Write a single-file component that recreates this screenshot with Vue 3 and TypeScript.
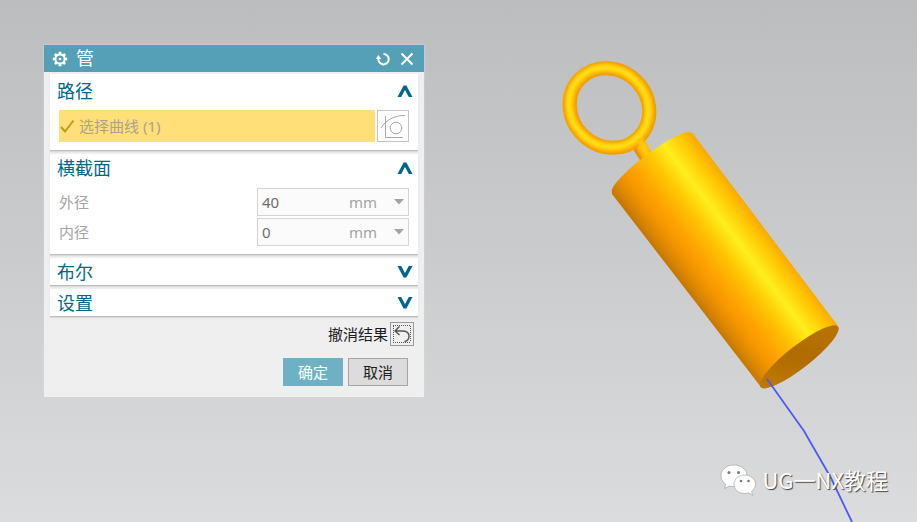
<script setup lang="ts">
import { reactive, ref } from 'vue'

interface Dimension {
  id: string
  label: string
  value: string
}

const dimensions = reactive<Dimension[]>([
  { id: 'outer', label: '外径', value: '40' },
  { id: 'inner', label: '内径', value: '0' },
])

const open = reactive<Record<string, boolean>>({
  path: true,
  section: true,
  boolean: false,
  settings: false,
})

const selected = ref(1)

const teeth = [0, 45, 90, 135, 180, 225, 270, 315]

function toggle(key: string): void {
  open[key] = !open[key]
}
</script>

<template>
  <main class="viewport">
    <svg class="scene" viewBox="0 0 917 522" preserveAspectRatio="xMaxYMin meet" aria-hidden="true">
      <defs>
        <linearGradient id="body" gradientUnits="userSpaceOnUse" x1="686" y1="289.5" x2="764.5" y2="229.5">
          <stop offset="0" stop-color="#c47600" />
          <stop offset="0.08" stop-color="#da8600" />
          <stop offset="0.2" stop-color="#f59600" />
          <stop offset="0.32" stop-color="#ffa202" />
          <stop offset="0.52" stop-color="#ffc404" />
          <stop offset="0.64" stop-color="#ffe010" />
          <stop offset="0.71" stop-color="#ffee20" />
          <stop offset="0.8" stop-color="#ffdc10" />
          <stop offset="0.92" stop-color="#ffc000" />
          <stop offset="1" stop-color="#f8ac00" />
        </linearGradient>
        <linearGradient id="cap" gradientUnits="userSpaceOnUse" x1="760" y1="387" x2="838" y2="326">
          <stop offset="0" stop-color="#c47c00" />
          <stop offset="0.5" stop-color="#b06c00" />
          <stop offset="1" stop-color="#bc7600" />
        </linearGradient>
        <linearGradient id="stem" gradientUnits="userSpaceOnUse" x1="636" y1="155" x2="648" y2="147">
          <stop offset="0" stop-color="#d88000" />
          <stop offset="0.35" stop-color="#ffac00" />
          <stop offset="0.7" stop-color="#ffd90c" />
          <stop offset="1" stop-color="#f8a800" />
        </linearGradient>
        <filter id="soft" x="-10%" y="-10%" width="120%" height="120%">
          <feGaussianBlur stdDeviation="1.4" />
        </filter>
      </defs>

      <path d="M631 146 L642 163 L654 157 L642 136Z" fill="url(#stem)" />
      <g fill="none" transform="rotate(45 609.5 108)">
        <ellipse cx="609.5" cy="108" rx="41.5" ry="38" stroke="#f09a00" stroke-width="14" />
        <ellipse cx="609" cy="108" rx="41.5" ry="38" stroke="#ffba00" stroke-width="10" filter="url(#soft)" />
        <ellipse cx="608.5" cy="108" rx="41.5" ry="38" stroke="#ffe014" stroke-width="5" filter="url(#soft)" />
      </g>
      <path d="M637 142 L644 153 L650 149 L642 138Z" fill="#ffc808" filter="url(#soft)" />

      <path d="M612 192 A49.3 9 -37 0 1 691 133 Q692 132 694 135 L838 326 L761 387 L612 194Z" fill="url(#body)" />
      <ellipse cx="799.3" cy="356.8" rx="49.2" ry="11.4" transform="rotate(-38 799.3 356.8)" fill="url(#cap)" />
      <path d="M767 379 L804 431 L831 478 L852 522" fill="none" stroke="#4a5cf0" stroke-width="1.8" />
    </svg>

    <form class="dialog" aria-label="管" @submit.prevent>
      <header class="titlebar">
        <svg class="gear" viewBox="0 0 16 16" aria-hidden="true">
          <rect
            v-for="angle in teeth"
            :key="angle"
            x="6.6"
            y="0.8"
            width="2.8"
            height="3"
            :transform="`rotate(${angle} 8 8)`"
          />
          <circle class="gear-ring" cx="8" cy="8" r="4.6" />
          <circle cx="8" cy="8" r="1.3" />
        </svg>
        <h1>管</h1>
        <button type="button" class="title-button" aria-label="重置">
          <svg viewBox="0 0 16 16">
            <path class="line" d="M8.500 3 A5.200 5.200 0 1 1 3.400 7.500" />
            <path d="M1 8 L3.2 4 L6.4 8Z" />
          </svg>
        </button>
        <button type="button" class="title-button" aria-label="关闭">
          <svg viewBox="0 0 16 16"><path class="line" d="M2.500 2.500 L13.500 13.500 M13.500 2.500 L2.500 13.500" /></svg>
        </button>
      </header>

      <div class="groups">
        <section class="group">
          <button type="button" class="group-head" :aria-expanded="open.path" @click="toggle('path')">
            <span>路径</span>
            <svg class="chevron" :class="{ down: !open.path }" viewBox="0 0 16 12"><path d="M0.500 12 L6.600 0.500 H9.400 L15.500 12 H11.800 L8 5 L4.200 12Z" /></svg>
          </button>
          <div v-if="open.path" class="path-row">
            <button type="button" class="select-curve">
              <svg viewBox="0 0 16 16" aria-hidden="true"><path d="M2 9 L6 13.5 L14.500 2.500" /></svg>
              选择曲线 ({{ selected }})
            </button>
            <button type="button" class="curve-tool" aria-label="曲线规则">
              <svg viewBox="0 0 30 30">
                <path d="M7.500 5 V26.500 H25 M3 17 C8 9 16 4.500 27 4.500" />
                <circle cx="18" cy="17" r="5.800" />
              </svg>
            </button>
          </div>
        </section>

        <section class="group">
          <button type="button" class="group-head" :aria-expanded="open.section" @click="toggle('section')">
            <span>横截面</span>
            <svg class="chevron" :class="{ down: !open.section }" viewBox="0 0 16 12"><path d="M0.500 12 L6.600 0.500 H9.400 L15.500 12 H11.800 L8 5 L4.200 12Z" /></svg>
          </button>
          <div v-if="open.section" class="dimensions">
            <div v-for="item in dimensions" :key="item.id" class="dimension">
              <label :for="item.id">{{ item.label }}</label>
              <div class="field">
                <input :id="item.id" v-model="item.value" type="text" />
                <span class="unit">mm</span>
                <button type="button" :aria-label="item.label">
                  <svg viewBox="0 0 10 6"><path d="M0 0 H10 L5 5.500Z" /></svg>
                </button>
              </div>
            </div>
          </div>
        </section>

        <section class="group">
          <button type="button" class="group-head" :aria-expanded="open.boolean" @click="toggle('boolean')">
            <span>布尔</span>
            <svg class="chevron" :class="{ down: !open.boolean }" viewBox="0 0 16 12"><path d="M0.500 12 L6.600 0.500 H9.400 L15.500 12 H11.800 L8 5 L4.200 12Z" /></svg>
          </button>
        </section>

        <section class="group">
          <button type="button" class="group-head" :aria-expanded="open.settings" @click="toggle('settings')">
            <span>设置</span>
            <svg class="chevron" :class="{ down: !open.settings }" viewBox="0 0 16 12"><path d="M0.500 12 L6.600 0.500 H9.400 L15.500 12 H11.800 L8 5 L4.200 12Z" /></svg>
          </button>
        </section>
      </div>

      <div class="undo-row">
        <span id="undo-label">撤消结果</span>
        <button type="button" class="undo" aria-labelledby="undo-label">
          <svg viewBox="0 0 22 22">
            <path class="dots" d="M2 2.500 H20 M2 19.500 H20 M2.500 3 V19 M19.500 3 V19" />
            <path class="arrow" d="M8.500 3.500 L4 8 L8.500 12 M4 8 H11 C15.500 8 18 10 18 13 C18 16 16 18 13.500 18.500" />
          </svg>
        </button>
      </div>

      <footer class="actions">
        <button type="submit" class="action primary">确定</button>
        <button type="button" class="action">取消</button>
      </footer>
    </form>

    <div class="watermark">
      <svg viewBox="0 0 38 34" aria-hidden="true">
        <g class="bubble">
          <path d="M14 1 C6.500 1 1 5.800 1 11.800 C1 15.300 2.900 18.300 5.800 20.300 L4.500 24.500 L9.300 22 C10.800 22.400 12.400 22.600 14 22.600 C21.500 22.600 27 17.800 27 11.800 C27 5.800 21.500 1 14 1Z" />
          <path d="M24.500 11 C18.500 11 14 15 14 20.200 C14 25.400 18.500 29.500 24.500 29.500 C26 29.500 27.400 29.200 28.700 28.800 L32.500 31.500 L31.600 27.400 C34 25.700 35.500 23.200 35.500 20.200 C35.500 15 30.500 11 24.500 11Z" />
        </g>
        <g class="eye">
          <circle cx="9" cy="8.500" r="1.500" />
          <circle cx="18.500" cy="8.500" r="1.500" />
          <circle cx="21" cy="17" r="1.300" />
          <circle cx="28.500" cy="17" r="1.300" />
        </g>
      </svg>
      <span>UG一NX教程</span>
    </div>
  </main>
</template>

<style>
body {
  margin: 0;
}
</style>

<style scoped>
.viewport {
  position: relative;
  box-sizing: border-box;
  min-height: 100vh;
  padding: 45px 44px;
  overflow: hidden;
  background: linear-gradient(#bcbdbf, #c9cacc 45%, #dbdcdd);
  font-family: "Noto Sans", "Noto Sans CJK SC", sans-serif;
  font-size: 15px;
  line-height: 20px;
  color: #1c1c1c;
}

.scene {
  position: absolute;
  inset: 0;
  width: 100%;
  height: 100%;
}

button {
  margin: 0;
  padding: 0;
  border: 0;
  background: none;
  font: inherit;
  color: inherit;
}

svg {
  display: block;
}

.dialog {
  position: relative;
  max-width: 380px;
  padding-bottom: 11px;
  background: #efefef;
  box-shadow: 0 0 2px #d8d8d8;
}

.titlebar {
  display: flex;
  align-items: center;
  height: 27px;
  padding: 0 9px 0 8px;
  background: #559fb7;
  color: #fff;
}

.titlebar h1 {
  flex: 1;
  margin: 0;
  padding-left: 8px;
  font-size: 18px;
  font-weight: 400;
  line-height: 27px;
}

.gear,
.title-button svg {
  width: 16px;
  height: 16px;
  fill: #fff;
}

.gear-ring,
.title-button .line {
  fill: none;
  stroke: #fff;
  stroke-width: 2;
}

.title-button + .title-button {
  margin-left: 8px;
}

.groups {
  display: grid;
  gap: 3px;
  padding: 2px 6px 0;
}

.group {
  border-bottom: 1px solid #bcbcbc;
  background: #fff;
  box-shadow: 0 1px 1px #dcdcdc;
}

.group-head {
  display: flex;
  align-items: center;
  justify-content: space-between;
  width: 100%;
  height: 27px;
  padding: 0 5px 0 7px;
  font-size: 18px;
  line-height: 28px;
  color: #006887;
}

.group:first-child .group-head {
  height: 33px;
}

.chevron {
  width: 16px;
  height: 12px;
  fill: #006887;
}

.chevron.down {
  transform: rotate(180deg);
}

.path-row {
  display: flex;
  gap: 2px;
  padding: 3px 9px 8px;
}

.select-curve {
  display: flex;
  flex: 1;
  gap: 4px;
  align-items: center;
  height: 32px;
  background: #ffdf78;
  color: #aaa38f;
}

.select-curve svg {
  width: 16px;
  height: 16px;
  fill: none;
  stroke: #bd9b1c;
  stroke-width: 2;
}

.curve-tool {
  box-sizing: border-box;
  width: 32px;
  height: 32px;
  border: 1px solid #c4c4c4;
}

.curve-tool svg {
  width: 30px;
  height: 30px;
  fill: none;
  stroke: #a9a9a9;
}

.dimensions {
  display: grid;
  gap: 2px;
  padding: 7px 9px 8px;
}

.dimension {
  display: flex;
  align-items: center;
  justify-content: space-between;
  color: #a4a4a4;
}

.field {
  display: flex;
  box-sizing: border-box;
  align-items: center;
  width: 152px;
  height: 28px;
  padding: 0 4px;
  border: 1px solid #d4d4d4;
  background: #fbfbfb;
}

.field input {
  flex: 1;
  min-width: 0;
  padding: 0;
  border: 0;
  outline: 0;
  background: none;
  font: inherit;
  color: #6c6c6c;
}

.unit {
  line-height: 26px;
}

.field button {
  padding-left: 17px;
}

.field button svg {
  width: 10px;
  height: 6px;
  fill: #a4a4a4;
}

.undo-row {
  display: flex;
  gap: 2px;
  align-items: center;
  justify-content: flex-end;
  padding: 5px 10px 0 0;
}

.undo {
  box-sizing: border-box;
  width: 24px;
  height: 24px;
  border: 1px solid #9a9a9a;
}

.undo svg {
  width: 22px;
  height: 22px;
  fill: none;
}

.dots {
  stroke: #555;
  stroke-dasharray: 1 1;
}

.arrow {
  stroke: #555;
  stroke-width: 1.4;
}

.actions {
  display: flex;
  gap: 5px;
  justify-content: flex-end;
  padding: 12px 16px 0 0;
}

.action {
  box-sizing: border-box;
  width: 60px;
  height: 28px;
  border: 1px solid #a6a6a6;
  background: #dcdcdc;
}

.action.primary {
  border-color: #6fb1c4;
  background: #6fb1c4;
  color: #fff;
}

.watermark {
  position: absolute;
  right: 29px;
  bottom: 24px;
  display: flex;
  gap: 4px;
  align-items: center;
  font-family: "Noto Sans CJK SC", sans-serif;
  font-size: 22px;
  line-height: 30px;
  color: #fff;
  text-shadow: 1px 1px 1px #444;
}

.watermark span {
  padding-bottom: 4px;
}

.watermark svg {
  width: 38px;
  height: 34px;
}

.bubble {
  fill: #fff;
  stroke: #999;
  stroke-width: 0.6;
}

.eye {
  fill: #777;
}
</style>
